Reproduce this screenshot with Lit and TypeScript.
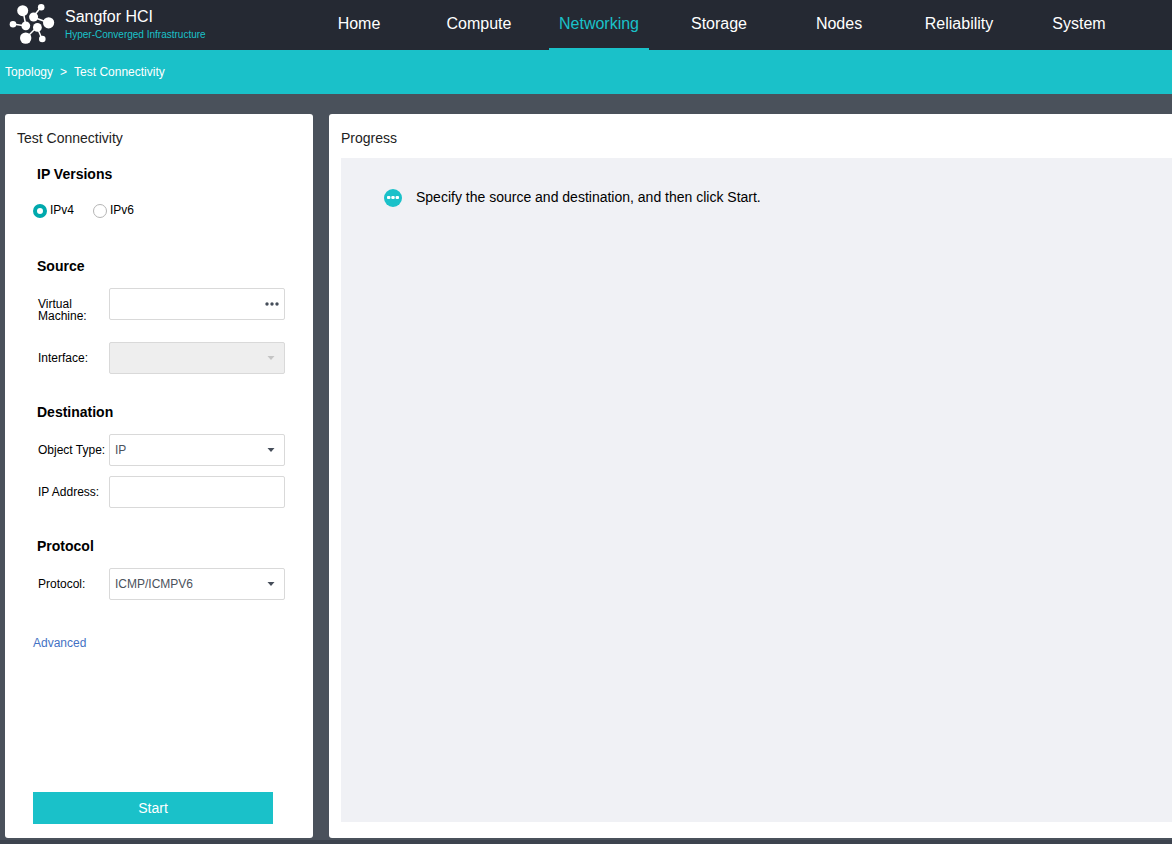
import { LitElement, html, css, svg } from "lit";
import { customElement, property, state } from "lit/decorators.js";
import { classMap } from "lit/directives/class-map.js";

const NAV = ["Home", "Compute", "Networking", "Storage", "Nodes", "Reliability", "System"];

const LINKS = [
  [23, 11, 26, 26],
  [13, 24, 26, 26],
  [41, 7, 33, 17],
  [33, 17, 49, 23],
  [37, 27, 26, 38],
  [37, 27, 42, 39],
];

const NODES = [
  [22.7, 10.7, 5.5],
  [41.2, 7.3, 3.3],
  [33.6, 17, 4.5],
  [48.6, 22.8, 5.6],
  [13, 24.3, 3.3],
  [25.8, 25.8, 4.4],
  [37.4, 27.4, 4.4],
  [25.7, 38.1, 5.7],
  [42.3, 39, 3.3],
];

const caret = html`<svg class="caret" width="8" height="4" viewBox="0 0 8 4" aria-hidden="true">
  <path d="M0.5 0H7.5L4 4Z" fill="currentColor" />
</svg>`;

@customElement("app-header")
class AppHeader extends LitElement {
  @property() active = "Networking";

  static styles = css`
    .bar {
      display: flex;
      height: 50px;
      background: #252933;
      color: #fff;
    }
    .brand {
      display: flex;
      flex: none;
      width: 309px;
    }
    .logo {
      flex: none;
      margin-right: 1px;
    }
    .name {
      font-size: 16px;
      line-height: 20px;
      padding-top: 7px;
    }
    .tagline {
      font-size: 10px;
      line-height: 16px;
      color: #1ac1c9;
    }
    .nav {
      display: flex;
      gap: 20px;
    }
    .link {
      box-sizing: border-box;
      width: 100px;
      height: 50px;
      line-height: 48px;
      font-size: 16px;
      text-align: center;
      color: inherit;
      text-decoration: none;
    }
    .link.active {
      color: #1ac1c9;
      border-bottom: 2px solid #1ac1c9;
    }
  `;

  render() {
    return html`<header class="bar">
      <div class="brand">
        <svg class="logo" width="64" height="50" viewBox="0 0 64 50" aria-hidden="true">
          <g stroke="#fff" stroke-width="1.5">
            ${LINKS.map(([a, b, c, d]) => svg`<line x1=${a} y1=${b} x2=${c} y2=${d} />`)}
          </g>
          <g fill="#fff">${NODES.map(([x, y, r]) => svg`<circle cx=${x} cy=${y} r=${r} />`)}</g>
        </svg>
        <div>
          <div class="name">Sangfor HCI</div>
          <div class="tagline">Hyper-Converged Infrastructure</div>
        </div>
      </div>
      <nav class="nav">
        ${NAV.map(
          (n) => html`<a href="#" class=${classMap({ link: true, active: n === this.active })}>${n}</a>`
        )}
      </nav>
    </header>`;
  }
}

@customElement("connectivity-form")
class ConnectivityForm extends LitElement {
  @state() private version = "IPv4";

  static styles = css`
    :host {
      display: flex;
    }
    .form {
      display: flex;
      flex-direction: column;
      flex: 1;
      padding: 16px 28px 14px;
      font-size: 12px;
    }
    .heading {
      margin: 0 0 12px 4px;
      font-size: 14px;
      line-height: 20px;
      font-weight: 700;
    }
    .versions {
      margin: 0 0 36px;
      padding: 0;
      border: 0;
    }
    .versions .heading {
      padding: 0;
      margin-bottom: 16px;
    }
    .radios {
      display: flex;
      gap: 19px;
    }
    .choice {
      display: flex;
      align-items: center;
      gap: 3px;
      line-height: 20px;
    }
    .radio {
      appearance: none;
      box-sizing: border-box;
      width: 14px;
      height: 14px;
      margin: 2px 0 0;
      border: 1px solid #b5b5b5;
      border-radius: 50%;
      background: #fff;
    }
    .radio:checked {
      border: 4px solid #00a9ad;
    }
    .section {
      margin-bottom: 28px;
    }
    .rows {
      display: grid;
      gap: 10px;
      margin-left: 5px;
    }
    .rows.loose {
      gap: 20px;
    }
    .row {
      display: grid;
      grid-template-columns: 71px 1fr;
    }
    .label {
      padding-top: 10px;
      line-height: 12px;
    }
    .control {
      position: relative;
    }
    .field {
      appearance: none;
      display: block;
      box-sizing: border-box;
      width: 100%;
      height: 32px;
      margin: 0;
      padding: 0 5px;
      border: 1px solid #d9d9d9;
      border-radius: 2px;
      background: #fff;
      color: #4b525c;
      font: inherit;
      opacity: 1;
    }
    .field:disabled {
      background: #eee;
    }
    .caret {
      position: absolute;
      top: 14px;
      right: 10px;
      color: #454d59;
      pointer-events: none;
    }
    .field:disabled + .caret {
      color: #c4c4c4;
    }
    .more {
      position: absolute;
      top: 1px;
      right: 1px;
      display: grid;
      place-items: center;
      width: 24px;
      height: 30px;
      padding: 0;
      border: 0;
      background: none;
      color: #454d59;
    }
    .advanced {
      align-self: flex-start;
      margin-top: 5px;
      line-height: 20px;
      color: #4472c4;
      text-decoration: none;
    }
    .start {
      height: 32px;
      margin: auto 12px 0 0;
      border: 0;
      background: #1ac1c9;
      color: #fff;
      font-family: inherit;
      font-size: 14px;
    }
  `;

  private choice(v: string) {
    return html`<label class="choice">
      <input
        class="radio"
        type="radio"
        name="version"
        .checked=${this.version === v}
        @change=${() => (this.version = v)}
      />${v}</label
    >`;
  }

  render() {
    return html`<form class="form" @submit=${(e: Event) => e.preventDefault()}>
      <fieldset class="versions">
        <legend class="heading">IP Versions</legend>
        <div class="radios">${this.choice("IPv4")}${this.choice("IPv6")}</div>
      </fieldset>

      <section class="section">
        <h3 class="heading">Source</h3>
        <div class="rows loose">
          <div class="row">
            <label class="label" for="vm">Virtual Machine:</label>
            <div class="control">
              <input class="field" id="vm" type="text" />
              <button class="more" type="button" aria-label="Browse">
                <svg width="14" height="4" viewBox="0 0 14 4" fill="currentColor">
                  <circle cx="2" cy="2" r="1.7" />
                  <circle cx="7" cy="2" r="1.7" />
                  <circle cx="12" cy="2" r="1.7" />
                </svg>
              </button>
            </div>
          </div>
          <div class="row">
            <label class="label" for="iface">Interface:</label>
            <div class="control"><select class="field" id="iface" disabled></select>${caret}</div>
          </div>
        </div>
      </section>

      <section class="section">
        <h3 class="heading">Destination</h3>
        <div class="rows">
          <div class="row">
            <label class="label" for="type">Object Type:</label>
            <div class="control">
              <select class="field" id="type">
                <option>IP</option></select
              >${caret}
            </div>
          </div>
          <div class="row">
            <label class="label" for="address">IP Address:</label>
            <input class="field" id="address" type="text" />
          </div>
        </div>
      </section>

      <section class="section">
        <h3 class="heading">Protocol</h3>
        <div class="rows">
          <div class="row">
            <label class="label" for="protocol">Protocol:</label>
            <div class="control">
              <select class="field" id="protocol">
                <option>ICMP/ICMPV6</option></select
              >${caret}
            </div>
          </div>
        </div>
      </section>

      <a class="advanced" href="#">Advanced</a>
      <button class="start" type="submit">Start</button>
    </form>`;
  }
}

@customElement("app-root")
class AppRoot extends LitElement {
  static styles = css`
    :host {
      display: flex;
      flex-direction: column;
      box-sizing: border-box;
      min-height: 100vh;
      background: #4a515b;
      border-bottom: 4px solid #3d434e;
      color: #000;
      font-family: "Liberation Sans", Arial, sans-serif;
    }
    .crumbs {
      display: flex;
      gap: 7px;
      padding: 0 5px;
      background: #1ac1c9;
      color: #fff;
      font-size: 12px;
      line-height: 44px;
    }
    .crumb {
      color: inherit;
      text-decoration: none;
    }
    .content {
      display: grid;
      grid-template-columns: 308px 1fr;
      gap: 16px;
      flex: 1;
      padding: 20px 0 2px 5px;
    }
    .panel {
      display: flex;
      flex-direction: column;
      background: #fff;
      border-radius: 3px;
    }
    .panel.wide {
      border-radius: 3px 0 0 3px;
    }
    .title {
      margin: 0;
      padding: 14px 12px 0;
      font-size: 14px;
      line-height: 20px;
      font-weight: 400;
      color: #222;
    }
    .form {
      flex: 1;
    }
    .progress {
      flex: 1;
      margin: 10px 0 16px 12px;
      padding: 29px 43px;
      background: #f0f1f5;
    }
    .status {
      display: flex;
      align-items: center;
      gap: 14px;
      margin: 0;
      font-size: 14px;
      line-height: 20px;
    }
  `;

  render() {
    return html`
      <app-header></app-header>
      <nav class="crumbs" aria-label="Breadcrumb">
        <a class="crumb" href="#">Topology</a><span>&gt;</span><a class="crumb" href="#">Test Connectivity</a>
      </nav>
      <main class="content">
        <section class="panel">
          <h2 class="title">Test Connectivity</h2>
          <connectivity-form class="form"></connectivity-form>
        </section>
        <section class="panel wide">
          <h2 class="title">Progress</h2>
          <div class="progress">
            <p class="status">
              <svg width="18" height="20" viewBox="0 0 18 20" aria-hidden="true">
                <circle cx="9" cy="11" r="9" fill="#1ac1c9" />
                <g fill="#fff">
                  <rect x="3" y="9" width="3.4" height="3" rx="1" />
                  <rect x="7.3" y="9" width="3.4" height="3" rx="1" />
                  <rect x="11.6" y="9" width="3.4" height="3" rx="1" />
                </g>
              </svg>
              Specify the source and destination, and then click Start.
            </p>
          </div>
        </section>
      </main>
    `;
  }
}
